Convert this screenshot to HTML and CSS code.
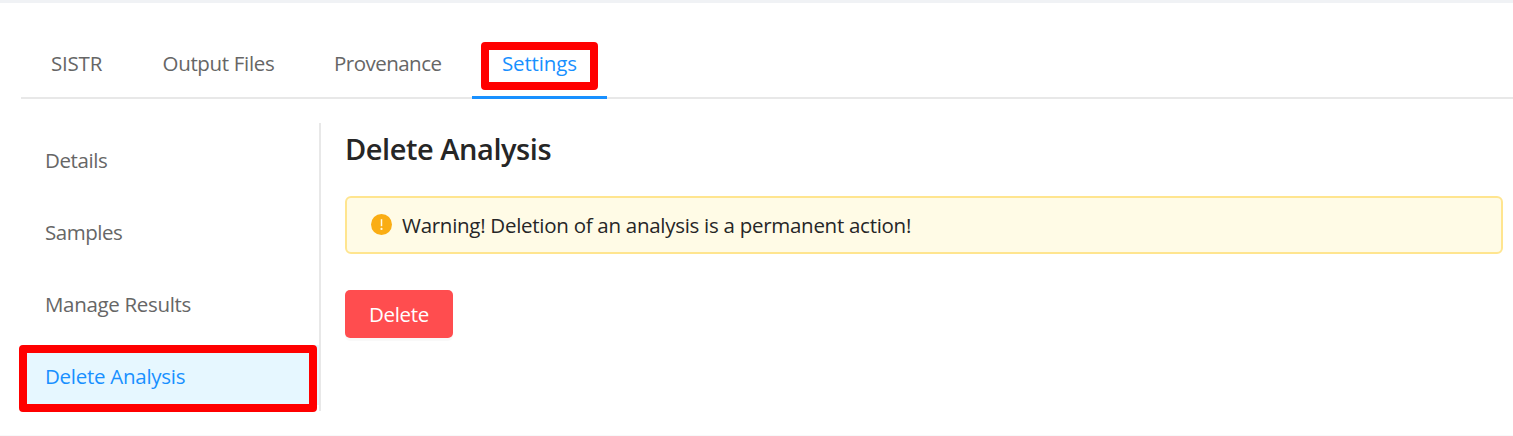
FILE: index.html
```html
<!DOCTYPE html>
<html lang="en">
<head>
<meta charset="utf-8">
<title>Delete Analysis</title>
<link rel="stylesheet" href="styles.css">
</head>
<body>
<div class="page">
  <nav class="tabs">
    <a class="tab tab-sistr">SISTR</a>
    <a class="tab tab-output">Output Files</a>
    <a class="tab tab-provenance">Provenance</a>
    <a class="tab tab-settings active">Settings<span class="highlight"></span></a>
  </nav>
  <div class="body">
    <aside class="menu">
      <a class="item details">Details</a>
      <a class="item samples">Samples</a>
      <a class="item manage">Manage Results</a>
      <a class="item delete-analysis selected">Delete Analysis<span class="highlight"></span></a>
    </aside>
    <main class="content">
      <h1 class="title">Delete Analysis</h1>
      <div class="alert">
        <svg class="alert-icon" viewBox="0 0 21 21"><circle cx="10.5" cy="10.5" r="10.5" fill="#faad14"/><path d="M10.5 5.2v7" stroke="#fffbe6" stroke-width="1.5"/><circle cx="10.5" cy="14.9" r="1.1" fill="#fffbe6"/></svg>
        <span class="alert-text">Warning! Deletion of an analysis is a permanent action!</span>
      </div>
      <button class="button">Delete</button>
    </main>
  </div>
</div>
</body>
</html>
```
FILE: styles.css
```css
* { box-sizing: border-box; }
body {
  margin: 0;
  background: #fff;
  color: #262626;
  font: 400 20.5px/32px "Open Sans", "Noto Sans", sans-serif;
}
.page {
  height: 436px;
  border-top: 3px solid #f0f2f5;
  border-bottom: 1px solid #f8f9fa;
  padding: 25px 0 0 21px;
  overflow: hidden;
}
.tabs {
  display: flex;
  height: 71px;
  box-shadow: inset 0 -2px #e8e8e8;
}
.tab {
  position: relative;
  padding: 19px 0 0 30px;
  color: #666;
  white-space: nowrap;
}
.tab-sistr { width: 112px; letter-spacing: -.2px; }
.tab-output { width: 171px; padding-left: 29.5px; letter-spacing: -.32px; }
.tab-provenance { width: 168px; letter-spacing: -.52px; }
.tab-settings { width: 135px; letter-spacing: -.15px; }
.tab.active {
  color: #1890ff;
  border-bottom: 3px solid #1890ff;
}
.highlight {
  position: absolute;
  border: 8px solid #f00;
  border-radius: 4px;
}
.tab .highlight { left: 9px; top: 14px; width: 117px; height: 48px; }
.body {
  display: flex;
  padding-top: 24px;
}
.menu {
  display: flex;
  flex-direction: column;
  gap: 12px;
  width: 300px;
  height: 288px;
  padding-top: 6px;
  border-right: 2px solid #e8e8e8;
}
.item {
  position: relative;
  height: 60px;
  padding-left: 24px;
  line-height: 63px;
  color: #666;
  white-space: nowrap;
}
.details { letter-spacing: -.4px; }
.samples { letter-spacing: -.47px; }
.manage { letter-spacing: -.33px; }
.delete-analysis { letter-spacing: -.27px; }
.item.selected { color: #1890ff; background: #e6f7ff; }
.item .highlight { left: -2px; top: 0; width: 298px; height: 67px; }
.content { flex: 1; padding: 8px 10px 0 24px; }
.title {
  margin: 0 0 29.5px;
  font-size: 29px;
  font-weight: 600;
  line-height: 35px;
  letter-spacing: -.45px;
}
.alert {
  display: flex;
  align-items: center;
  height: 58px;
  margin-bottom: 36px;
  padding-left: 24px;
  border: 2px solid #ffe58f;
  border-radius: 6px;
  background: #fffbe6;
}
.alert-icon { width: 21px; height: 21px; margin-right: 10px; }
.alert-text { padding-top: 1px; letter-spacing: -.28px; }
.button {
  display: block;
  width: 108px;
  height: 48px;
  padding: 1px 0 0;
  border: 0;
  border-radius: 5px;
  background: #ff4d4f;
  box-shadow: 0 3px 0 rgba(0, 0, 0, .025);
  color: #fff;
  font: inherit;
  letter-spacing: -.35px;
}
```
